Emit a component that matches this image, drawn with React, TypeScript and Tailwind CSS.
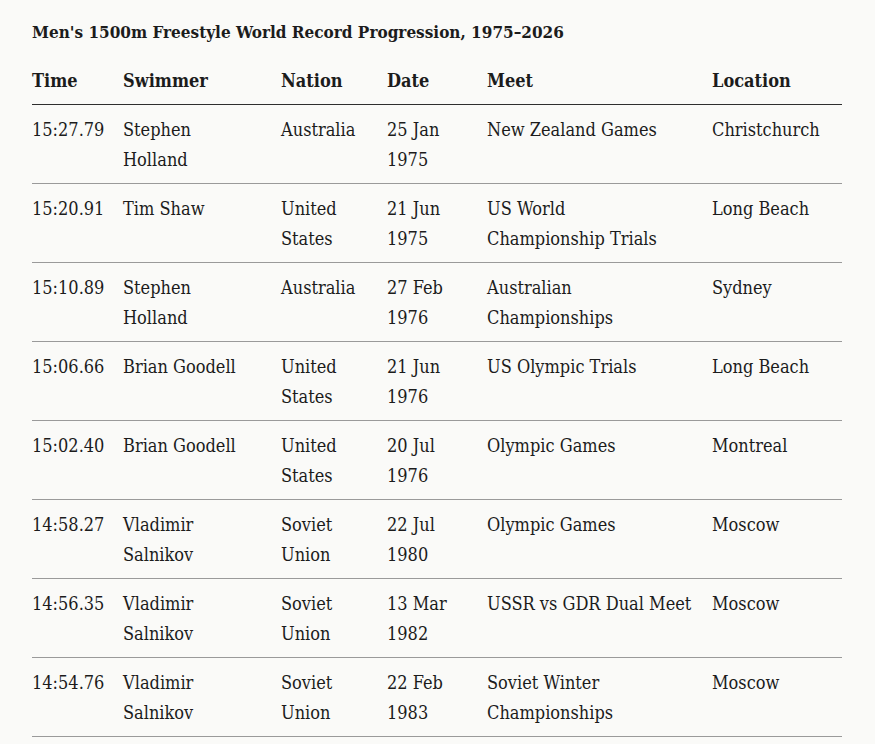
const records = [
  { time: '15:27.79', swimmer: 'Stephen Holland', nation: 'Australia', date: '25 Jan 1975', meet: 'New Zealand Games', location: 'Christchurch' },
  { time: '15:20.91', swimmer: 'Tim Shaw', nation: 'United States', date: '21 Jun 1975', meet: 'US World Championship\u00a0Trials', location: 'Long Beach' },
  { time: '15:10.89', swimmer: 'Stephen Holland', nation: 'Australia', date: '27 Feb 1976', meet: 'Australian Championships', location: 'Sydney' },
  { time: '15:06.66', swimmer: 'Brian Goodell', nation: 'United States', date: '21 Jun 1976', meet: 'US Olympic Trials', location: 'Long Beach' },
  { time: '15:02.40', swimmer: 'Brian Goodell', nation: 'United States', date: '20 Jul 1976', meet: 'Olympic Games', location: 'Montreal' },
  { time: '14:58.27', swimmer: 'Vladimir Salnikov', nation: 'Soviet Union', date: '22 Jul 1980', meet: 'Olympic Games', location: 'Moscow' },
  { time: '14:56.35', swimmer: 'Vladimir Salnikov', nation: 'Soviet Union', date: '13 Mar 1982', meet: 'USSR vs GDR Dual Meet', location: 'Moscow' },
  { time: '14:54.76', swimmer: 'Vladimir Salnikov', nation: 'Soviet Union', date: '22 Feb 1983', meet: 'Soviet Winter Championships', location: 'Moscow' },
];

const columns = ['Time', 'Swimmer', 'Nation', 'Date', 'Meet', 'Location'];

export default function App() {
  return (
    <div className="min-h-screen bg-[#fafaf8] text-[#1c1c1c] font-['DejaVu_Serif_Condensed','Liberation_Serif',serif] px-8 pt-5 pb-8">
      <h2 className="text-[17px] leading-6 font-bold mb-3">
        Men's 1500m Freestyle World Record Progression, 1975–2026
      </h2>
      <table className="w-[810px] table-fixed border-collapse text-[18px] leading-[30px]">
        <colgroup>
          <col className="w-[91px]" />
          <col className="w-[158px]" />
          <col className="w-[106px]" />
          <col className="w-[100px]" />
          <col className="w-[225px]" />
          <col className="w-[130px]" />
        </colgroup>
        <thead>
          <tr className="border-b border-[#2e2e2e]">
            {columns.map((c) => (
              <th key={c} className="text-left font-bold pt-[10px] pb-[8px] pr-4 align-top">
                {c}
              </th>
            ))}
          </tr>
        </thead>
        <tbody>
          {records.map((r) => (
            <tr key={r.time} className="border-b border-[#9a9a9a]">
              <td className="pt-[10px] pb-[8px] pr-2 align-top">{r.time}</td>
              <td className="pt-[10px] pb-[8px] pr-8 align-top">{r.swimmer}</td>
              <td className="pt-[10px] pb-[8px] pr-5 align-top">{r.nation}</td>
              <td className="pt-[10px] pb-[8px] pr-5 align-top">{r.date}</td>
              <td className="pt-[10px] pb-[8px] pr-3 align-top">{r.meet}</td>
              <td className="pt-[10px] pb-[8px] pr-2 align-top">{r.location}</td>
            </tr>
          ))}
        </tbody>
      </table>
    </div>
  );
}
